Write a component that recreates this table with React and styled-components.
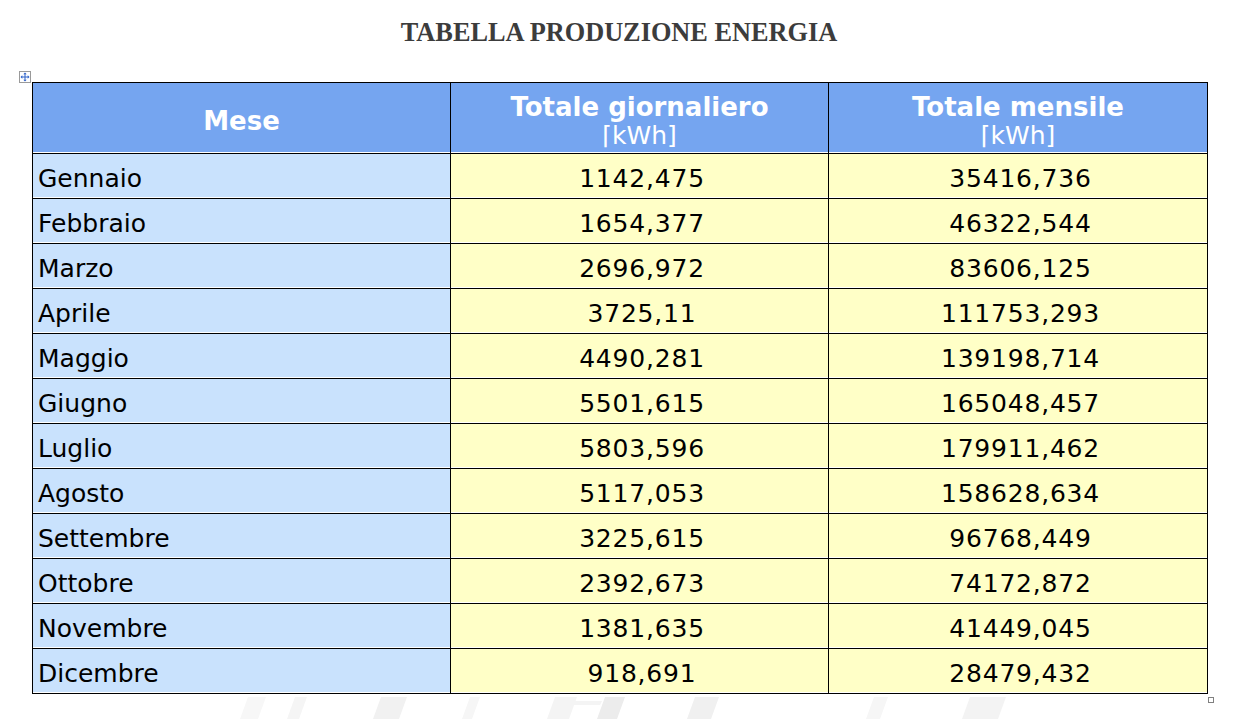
import React from "react";
import styled, { createGlobalStyle } from "styled-components";

const GlobalStyle = createGlobalStyle`
  html, body { margin: 0; padding: 0; background: #ffffff; }
  #root { width: 1238px; height: 719px; }
`;

const Page = styled.div`
  position: relative;
  width: 1238px;
  height: 719px;
  overflow: hidden;
  background: #ffffff;
`;

const Title = styled.h1`
  margin: 0;
  padding-top: 18px;
  text-align: center;
  font-family: "Liberation Serif", "Times New Roman", serif;
  font-weight: bold;
  font-size: 26.3px;
  line-height: 30px;
  color: #3c3c3c;
`;

const TableWrap = styled.div`
  position: relative;
  z-index: 1;
  margin: 34px 0 0 32px;
  width: 1176px;
`;

const Grid = styled.div`
  display: grid;
  grid-template-columns: 418px 378px 378px;
  border: 1px solid #000;
  font-family: "DejaVu Sans", Verdana, sans-serif;
`;

const Cell = styled.div`
  box-sizing: border-box;
  height: ${(p) => (p.$head ? 71 : p.$last ? 44 : 45)}px;
  border-right: ${(p) => (p.$lastCol ? "none" : "1px solid #000")};
  border-bottom: ${(p) => (p.$last ? "none" : "1px solid #000")};
  box-shadow: inset 0 -1px 0 #ffffff;
  background: ${(p) => (p.$head ? "#75a5f0" : p.$month ? "#c9e2fd" : "#ffffc7")};
  display: flex;
  flex-direction: column;
  justify-content: center;
  align-items: ${(p) => (p.$month && !p.$head ? "flex-start" : "center")};
  padding: ${(p) => (p.$head ? "6px 0 0 0" : "5px 0 0 5px")};
  color: ${(p) => (p.$head ? "#ffffff" : "#000000")};
  font-size: 25px;
  line-height: 28px;
  letter-spacing: ${(p) => (p.$month || p.$head ? "0" : "0.8px")};
  white-space: nowrap;
`;

const HeadTitle = styled.span`
  font-weight: bold;
  font-size: 26px;
`;

const HeadUnit = styled.span`
  font-weight: normal;
  font-size: 25px;
  margin-top: 1px;
`;

const MoveHandle = styled.div`
  position: absolute;
  left: -13px;
  top: -11px;
  width: 12px;
  height: 12px;
  line-height: 0;
`;

const ResizeHandle = styled.div`
  position: absolute;
  right: -6px;
  bottom: -9px;
  width: 4px;
  height: 4px;
  border: 1px solid #808080;
  background: #fff;
`;

const Watermark = styled.svg`
  position: absolute;
  left: 0;
  bottom: 0;
  z-index: 0;
  pointer-events: none;
`;

const rows = [
  ["Gennaio", "1142,475", "35416,736"],
  ["Febbraio", "1654,377", "46322,544"],
  ["Marzo", "2696,972", "83606,125"],
  ["Aprile", "3725,11", "111753,293"],
  ["Maggio", "4490,281", "139198,714"],
  ["Giugno", "5501,615", "165048,457"],
  ["Luglio", "5803,596", "179911,462"],
  ["Agosto", "5117,053", "158628,634"],
  ["Settembre", "3225,615", "96768,449"],
  ["Ottobre", "2392,673", "74172,872"],
  ["Novembre", "1381,635", "41449,045"],
  ["Dicembre", "918,691", "28479,432"],
];

function MoveIcon() {
  return (
    <svg width="12" height="12" viewBox="0 0 12 12">
      <rect x="0.5" y="0.5" width="11" height="11" fill="#ffffff" stroke="#9a9a9a" />
      <g fill="#2f62c8">
        <rect x="5.5" y="2.5" width="1" height="7" />
        <rect x="2.5" y="5.5" width="7" height="1" />
        <polygon points="6,1.5 4.3,3.3 7.7,3.3" />
        <polygon points="6,10.5 4.3,8.7 7.7,8.7" />
        <polygon points="1.5,6 3.3,4.3 3.3,7.7" />
        <polygon points="10.5,6 8.7,4.3 8.7,7.7" />
      </g>
    </svg>
  );
}

const bars = [
  { x: 240, w: 18, c: "#f7f7f7" },
  { x: 287, w: 12, c: "#f5f5f5" },
  { x: 373, w: 26, c: "#f1f1f1" },
  { x: 462, w: 10, c: "#f6f6f6" },
  { x: 547, w: 22, c: "#f4f4f4" },
  { x: 597, w: 20, c: "#ececec" },
  { x: 687, w: 24, c: "#f0f0f0" },
  { x: 866, w: 14, c: "#f6f6f6" },
  { x: 962, w: 36, c: "#f3f3f3" },
];

export default function App() {
  return (
    <>
      <GlobalStyle />
      <Page>
        <Watermark width="1238" height="22" viewBox="0 0 1238 22">
          {bars.map((b, i) => (
            <polygon
              key={i}
              points={`${b.x},22 ${b.x + b.w},22 ${b.x + b.w + 8},0 ${b.x + 8},0`}
              fill={b.c}
            />
          ))}
          <polygon points="560,8 600,8 602,4 562,4" fill="#f4f4f4" />
        </Watermark>
        <Title>TABELLA PRODUZIONE ENERGIA</Title>
        <TableWrap>
          <MoveHandle>
            <MoveIcon />
          </MoveHandle>
          <Grid>
            <Cell $head $month>
              <HeadTitle>Mese</HeadTitle>
            </Cell>
            <Cell $head>
              <HeadTitle>Totale giornaliero</HeadTitle>
              <HeadUnit>⌈kWh]</HeadUnit>
            </Cell>
            <Cell $head $lastCol>
              <HeadTitle>Totale mensile</HeadTitle>
              <HeadUnit>⌈kWh]</HeadUnit>
            </Cell>
            {rows.map((r, i) => {
              const last = i === rows.length - 1;
              return (
                <React.Fragment key={r[0]}>
                  <Cell $month $last={last}>{r[0]}</Cell>
                  <Cell $last={last}>{r[1]}</Cell>
                  <Cell $last={last} $lastCol>{r[2]}</Cell>
                </React.Fragment>
              );
            })}
          </Grid>
          <ResizeHandle />
        </TableWrap>
      </Page>
    </>
  );
}
